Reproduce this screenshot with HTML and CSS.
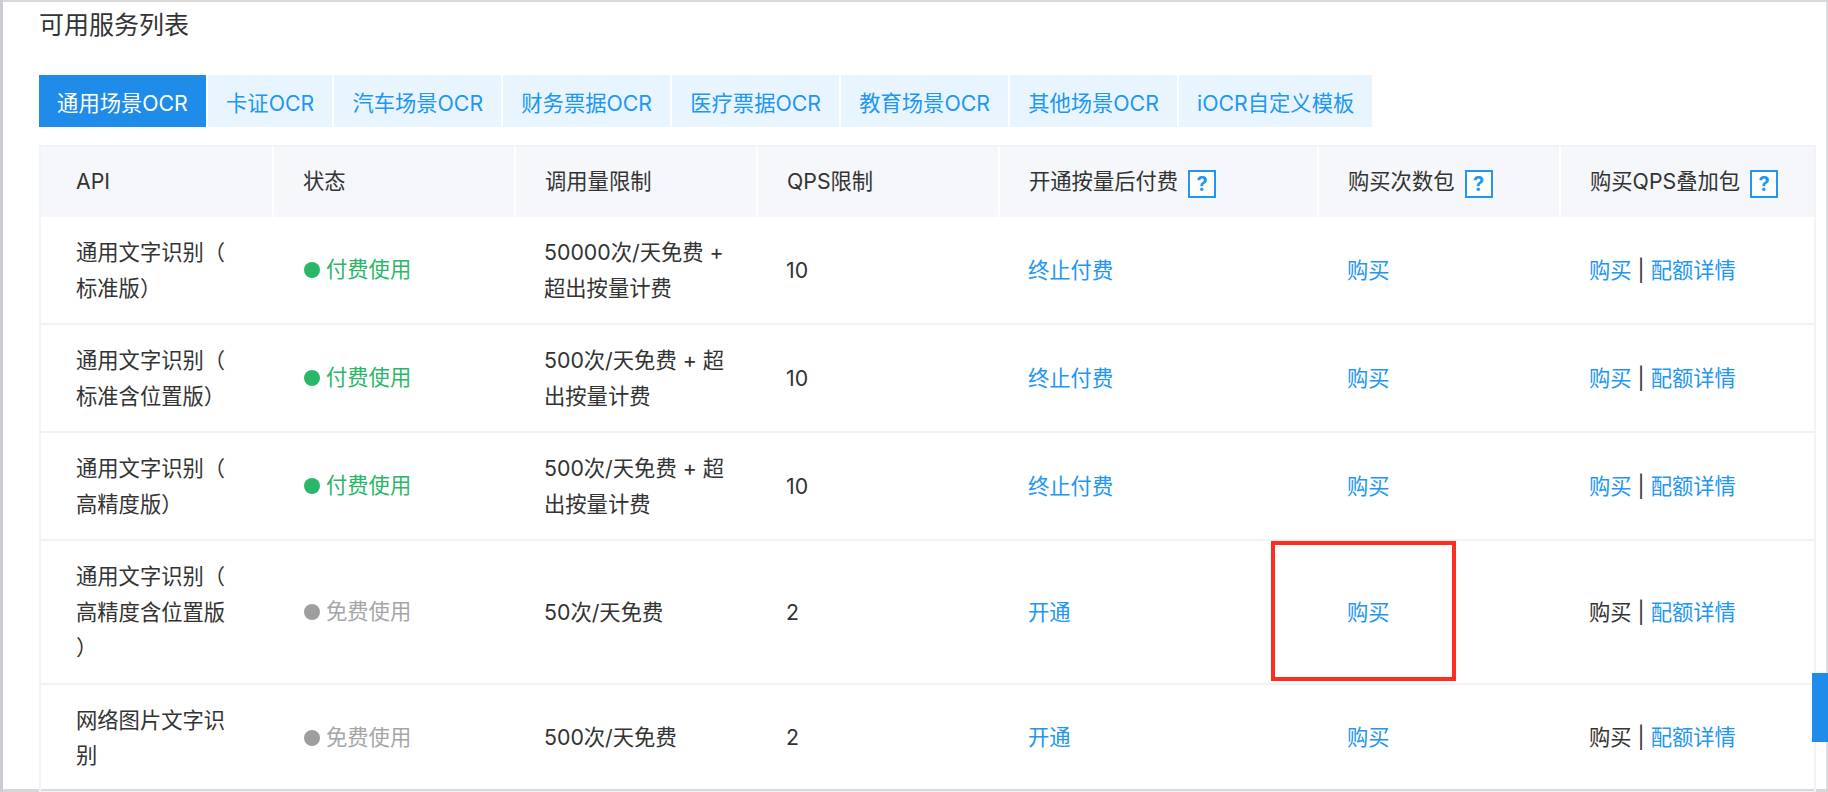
FILE: index.html
```html
<!DOCTYPE html>
<html lang="zh-CN">
<head>
<meta charset="utf-8">
<title>可用服务列表</title>
<link rel="stylesheet" href="styles.css">
</head>
<body>
<main class="page">
  <h2 class="title">可用服务列表</h2>
  <nav class="tabs">
    <a class="tab tab-active">通用场景OCR</a>
    <a class="tab">卡证OCR</a>
    <a class="tab">汽车场景OCR</a>
    <a class="tab">财务票据OCR</a>
    <a class="tab">医疗票据OCR</a>
    <a class="tab">教育场景OCR</a>
    <a class="tab">其他场景OCR</a>
    <a class="tab">iOCR自定义模板</a>
  </nav>
  <table class="grid">
    <colgroup>
      <col class="c1"><col class="c2"><col class="c3"><col class="c4"><col class="c5"><col class="c6"><col class="c7">
    </colgroup>
    <thead>
      <tr>
        <th>API</th>
        <th>状态</th>
        <th>调用量限制</th>
        <th>QPS限制</th>
        <th>开通按量后付费<span class="help">?</span></th>
        <th>购买次数包<span class="help">?</span></th>
        <th>购买QPS叠加包<span class="help">?</span></th>
      </tr>
    </thead>
    <tbody>
      <tr>
        <td>通用文字识别（标准版）</td>
        <td><span class="status paid">付费使用</span></td>
        <td>50000次/天免费 + 超出按量计费</td>
        <td>10</td>
        <td><a>终止付费</a></td>
        <td><a>购买</a></td>
        <td><a>购买</a> | <a>配额详情</a></td>
      </tr>
      <tr>
        <td>通用文字识别（标准含位置版）</td>
        <td><span class="status paid">付费使用</span></td>
        <td>500次/天免费 + 超出按量计费</td>
        <td>10</td>
        <td><a>终止付费</a></td>
        <td><a>购买</a></td>
        <td><a>购买</a> | <a>配额详情</a></td>
      </tr>
      <tr>
        <td>通用文字识别（高精度版）</td>
        <td><span class="status paid">付费使用</span></td>
        <td>500次/天免费 + 超出按量计费</td>
        <td>10</td>
        <td><a>终止付费</a></td>
        <td><a>购买</a></td>
        <td><a>购买</a> | <a>配额详情</a></td>
      </tr>
      <tr>
        <td>通用文字识别（高精度含位置版）</td>
        <td><span class="status free">免费使用</span></td>
        <td>50次/天免费</td>
        <td>2</td>
        <td><a>开通</a></td>
        <td><a>购买</a></td>
        <td>购买 | <a>配额详情</a></td>
      </tr>
      <tr>
        <td>网络图片文字识别</td>
        <td><span class="status free">免费使用</span></td>
        <td>500次/天免费</td>
        <td>2</td>
        <td><a>开通</a></td>
        <td><a>购买</a></td>
        <td>购买 | <a>配额详情</a></td>
      </tr>
    </tbody>
  </table>
  <div class="highlight"></div>
  <div class="scroll-thumb"></div>
</main>
</body>
</html>
```

FILE: styles.css
```css
* { box-sizing: border-box; }
html, body { margin: 0; height: 100%; overflow: hidden; background: #fff; }
body { font-family: Inter, "Noto Sans CJK SC", sans-serif; color: #333; }
.page {
  position: relative;
  width: 1828px;
  height: 792px;
  overflow: hidden;
  padding: 3px 0 0 36px;
  border-left: 3px solid #c9ccd1;
  box-shadow: inset 0 2px 0 #d8d8d8, inset 0 -3px 0 #d8d8d8, inset -2px 0 0 #dcdee1;
}
.title {
  margin: 0;
  height: 72px;
  font-size: 25px;
  font-weight: 400;
  line-height: 44px;
  color: #333;
}
.tabs { display: flex; gap: 2px; height: 52px; }
.tab {
  display: flex;
  align-items: center;
  padding: 0 18.1px;
  background: #e8f5fe;
  color: #2196f3;
  font-size: 21.3px;
}
.tab-active { background: #1e8ce8; color: #fff; }
.grid {
  margin-top: 18px;
  width: 1777px;
  table-layout: fixed;
  border-collapse: separate;
  border-spacing: 0;
  font-size: 21.3px;
  line-height: 35.5px;
  border-left: 2px solid #f0f3f8;
  border-right: 2px solid #f0f3f8;
}
.c1 { width: 231px; }
.c2 { width: 242px; }
.c3 { width: 242px; }
.c4 { width: 242px; }
.c5 { width: 319px; }
.c6 { width: 242px; }
th {
  height: 72px;
  padding: 0 0 0 29px;
  background: #f5f7fa;
  border-top: 2px solid #f0f2f5;
  border-left: 2px solid #fff;
  font-weight: 400;
  text-align: left;
  white-space: nowrap;
}
th:first-child { border-left: 0; padding-left: 35px; }
td {
  padding: 18px 30px 17px;
  border-bottom: 2px solid #eff3f8;
  vertical-align: middle;
}
td:first-child { padding-left: 35px; line-break: anywhere; text-spacing-trim: space-all; }
td a { color: #2196f3; }
.help {
  display: inline-block;
  width: 28px;
  height: 28px;
  margin: 2px 0 0 10px;
  border: 2px solid #2196f3;
  background: #fff;
  color: #2196f3;
  font-size: 20px;
  font-weight: 700;
  line-height: 24px;
  text-align: center;
  vertical-align: middle;
}
.status { display: inline-flex; align-items: center; gap: 6px; margin-left: 2px; }
.status::before {
  content: "";
  width: 16px;
  height: 16px;
  border-radius: 50%;
  background: currentColor;
}
.paid { color: #2ab768; }
.free { color: #a6a6a6; }
.free::before { background: #9e9e9e; }
.highlight {
  position: absolute;
  left: 1268px;
  top: 541px;
  width: 185px;
  height: 140px;
  border: 4px solid #ff2d1f;
}
.scroll-thumb {
  position: absolute;
  left: 1809px;
  top: 673px;
  width: 16px;
  height: 69px;
  background: #1e8ce8;
}
```
